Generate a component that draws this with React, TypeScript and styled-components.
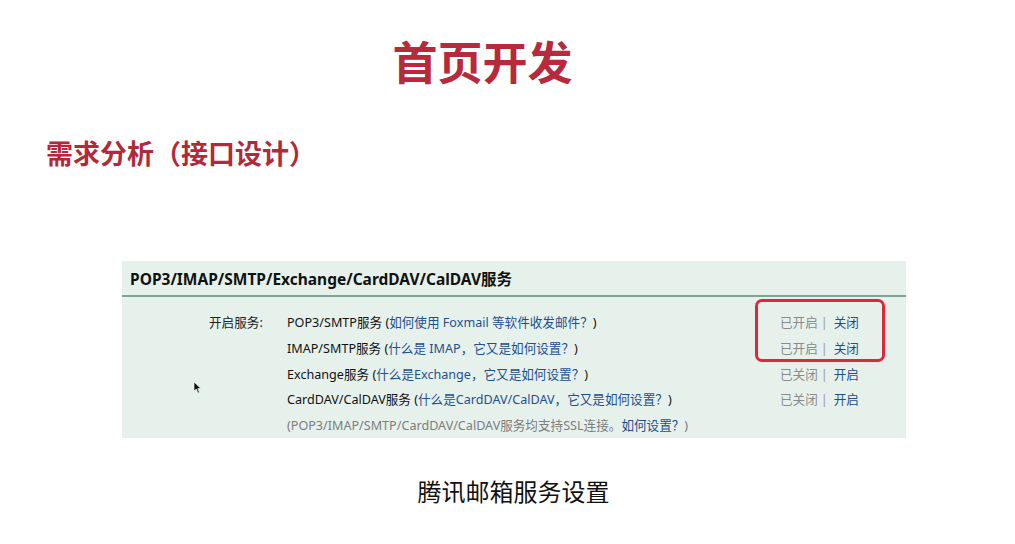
import React from "react";
import styled, { createGlobalStyle } from "styled-components";

const GlobalStyle = createGlobalStyle`
    body {
        margin: 0;
        background: #ffffff;
        font-family: "Noto Sans", "Noto Sans CJK SC", sans-serif;
    }
`;

const Page = styled.div`
    width: 1015px;
    height: 544px;
    padding-top: 36px;
    box-sizing: border-box;
    position: relative;
    overflow: hidden;
`;

const Title = styled.h1`
    margin: 0;
    padding-right: 50px;
    text-align: center;
    font-family: "Noto Sans CJK SC", sans-serif;
    font-size: 45px;
    line-height: 50px;
    font-weight: 700;
    color: #b72a3b;
`;

const Heading = styled.h2`
    margin: 52px 0 0;
    padding-left: 46px;
    font-family: "Noto Sans CJK SC", sans-serif;
    font-size: 27px;
    line-height: 30px;
    font-weight: 700;
    color: #b02a3a;
`;

const Panel = styled.div`
    position: relative;
    margin: 93px 0 0 122px;
    width: 784px;
    background: #e6f1ec;
`;

const PanelHeader = styled.div`
    height: 34px;
    padding-left: 8px;
    display: flex;
    align-items: center;
    font-size: 15.5px;
    font-weight: 700;
    color: #111;
    border-bottom: 2px solid #7fa597;
`;

const PanelBody = styled.div`
    display: grid;
    grid-template-columns: 78px 493px 1fr;
    grid-auto-rows: 25.7px;
    padding: 12px 0 1px 87px;
    font-size: 12.6px;
    align-items: center;
`;

const Label = styled.div`
    color: #222;
`;

const Service = styled.div<{ $muted?: boolean }>`
    grid-column: 2;
    white-space: nowrap;
    color: ${(p) => (p.$muted ? "#7d7d7d" : "#111")};
`;

const Link = styled.span`
    color: #1e4f8f;
`;

const Status = styled.div`
    grid-column: 3;
    color: #8a8a8a;
    white-space: nowrap;
`;

const Sep = styled.span`
    margin: 0 6px 0 3px;
    color: #9a9a9a;
`;

const Highlight = styled.div`
    position: absolute;
    left: 633px;
    top: 38px;
    width: 130px;
    height: 63px;
    box-sizing: border-box;
    border: 3px solid #e0263a;
    border-radius: 7px;
`;

const Caption = styled.div`
    margin-top: 38px;
    padding-left: 12px;
    text-align: center;
    font-family: "Noto Sans CJK SC", sans-serif;
    font-size: 24px;
    line-height: 30px;
    color: #111;
`;

const Cursor = styled.svg`
    position: absolute;
    left: 193px;
    top: 381px;
`;

const services = [
    { name: "POP3/SMTP服务", help: "如何使用 Foxmail 等软件收发邮件？", on: true },
    { name: "IMAP/SMTP服务", help: "什么是 IMAP，它又是如何设置？", on: true },
    { name: "Exchange服务", help: "什么是Exchange，它又是如何设置？", on: false },
    { name: "CardDAV/CalDAV服务", help: "什么是CardDAV/CalDAV，它又是如何设置？", on: false },
];

export default function App() {
    return (
        <Page>
            <GlobalStyle />
            <Title>首页开发</Title>
            <Heading>需求分析（接口设计）</Heading>
            <Panel>
                <PanelHeader>POP3/IMAP/SMTP/Exchange/CardDAV/CalDAV服务</PanelHeader>
                <PanelBody>
                    {services.map((s, i) => (
                        <React.Fragment key={s.name}>
                            {i === 0 ? <Label>开启服务:</Label> : null}
                            <Service>
                                {s.name} (<Link>{s.help}</Link>)
                            </Service>
                            <Status>
                                {s.on ? "已开启" : "已关闭"}
                                <Sep>|</Sep>
                                <Link>{s.on ? "关闭" : "开启"}</Link>
                            </Status>
                        </React.Fragment>
                    ))}
                    <Service $muted>
                        (POP3/IMAP/SMTP/CardDAV/CalDAV服务均支持SSL连接。<Link>如何设置？</Link>)
                    </Service>
                </PanelBody>
                <Highlight />
            </Panel>
            <Caption>腾讯邮箱服务设置</Caption>
            <Cursor width="9" height="13" viewBox="0 0 9 13">
                <path d="M1 1 L1 10 L3.3 8 L5 12 L6.4 11.4 L4.8 7.6 L7.8 7.4 Z" fill="#111" stroke="#fff" strokeWidth="0.6" />
            </Cursor>
        </Page>
    );
}
